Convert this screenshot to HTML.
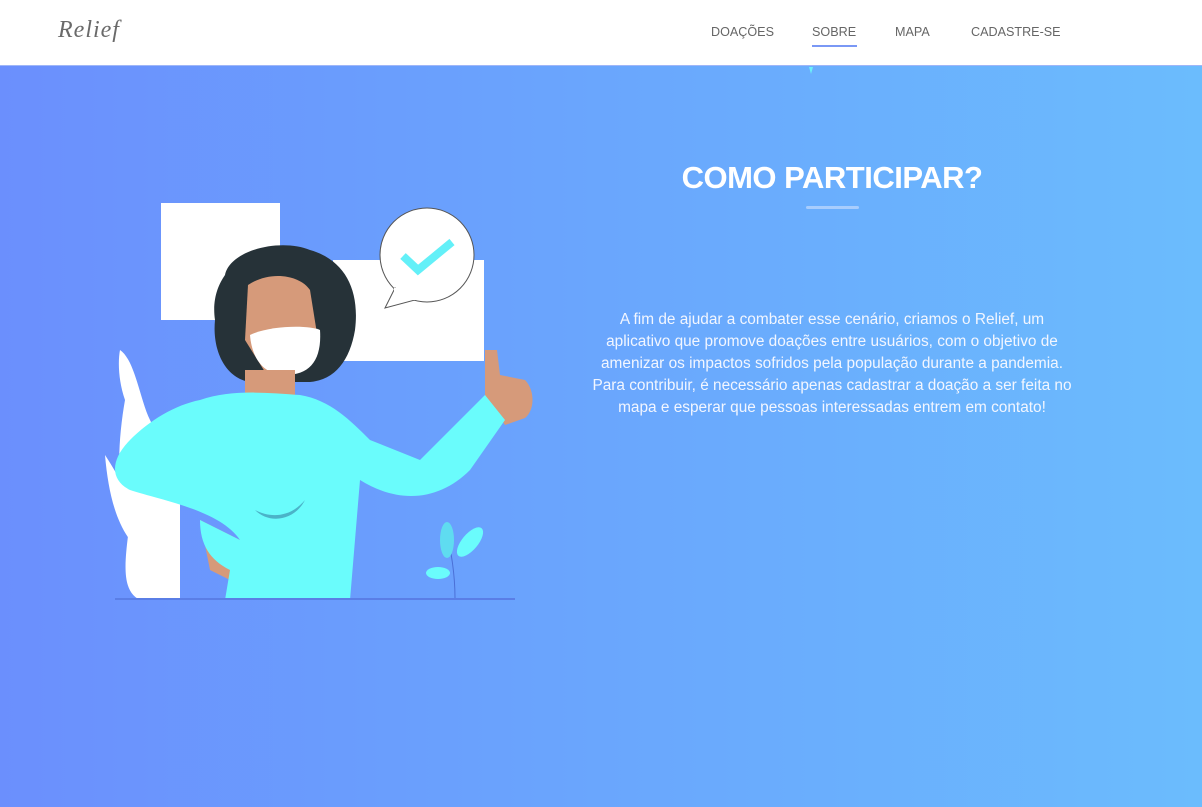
<!DOCTYPE html>
<html><head><meta charset="utf-8"><style>
*{margin:0;padding:0;box-sizing:border-box}
body{width:1202px;height:807px;overflow:hidden;font-family:"Liberation Sans",sans-serif;background:linear-gradient(90deg,#6b8ffd 0%,#6aa6fd 50%,#6bbcfd 100%);position:relative}
header{position:absolute;left:0;top:0;width:1202px;height:66px;background:#fff;border-bottom:1px solid #9fb6f8}
.logo{position:absolute;left:58px;top:17px;font-family:"Liberation Serif",serif;font-style:italic;font-size:24px;color:#6a6a6a;letter-spacing:1px}
nav a{position:absolute;top:25px;font-size:12.6px;color:#666;text-decoration:none}
.ul{position:absolute;left:812px;top:45px;width:45px;height:2px;background:#7a98f5}
h1{position:absolute;left:600px;width:464px;top:160px;text-align:center;color:#fff;font-size:31px;font-weight:bold;letter-spacing:-0.5px}
.bar{position:absolute;left:806px;top:206px;width:53px;height:3px;background:#a8cdfd;border-radius:2px}
p{position:absolute;left:532px;width:600px;top:309px;text-align:center;color:#f2f6ff;font-size:15.4px;line-height:22px;white-space:nowrap}
</style></head><body>
<header>
<div class="logo">Relief</div>
<nav><a style="left:711px">DOAÇÕES</a><a style="left:812px">SOBRE</a><a style="left:895px">MAPA</a><a style="left:971px">CADASTRE-SE</a></nav>
<div class="ul"></div>
</header>
<svg style="position:absolute;left:0;top:0" width="1202" height="807">
<path d="M809 67 L813 67 L811 74Z" fill="#6cf0f8"/>
<rect x="161" y="203" width="119" height="117" fill="#fff"/>
<rect x="333" y="260" width="151" height="101" fill="#fff"/>
<path d="M120 350 C135 360 140 400 150 420 C160 440 165 460 180 480 L180 600 L140 600 C120 590 125 560 130 520 C115 490 118 440 125 400 C118 380 118 360 120 350Z" fill="#fff"/>
<path d="M105 455 C115 470 125 490 140 510 L130 540 C115 520 108 490 105 455Z" fill="#fff"/>
<circle cx="427" cy="255" r="47" fill="#fff" stroke="#555" stroke-width="1"/>
<path d="M395 288 L385 308 L415 300Z" fill="#fff" stroke="#555" stroke-width="1"/>
<rect x="394" y="288" width="24" height="12" fill="#fff"/>
<path d="M403 256 L418 270 L452 242" fill="none" stroke="#63f0f8" stroke-width="8"/>
<path d="M225 275 C230 250 280 238 310 250 C345 260 360 290 355 330 C350 360 335 380 310 382 L250 382 C225 378 212 350 215 320 C212 300 218 285 225 275Z" fill="#263238"/>
<path d="M248 285 C270 270 300 275 310 290 L318 340 L300 372 L265 372 L245 340 Z" fill="#d69a7a"/>
<path d="M250 335 C270 325 310 325 320 330 C322 360 310 375 285 375 C265 375 252 360 250 335Z" fill="#fff"/>
<rect x="245" y="370" width="50" height="40" fill="#d69a7a"/>
<path d="M485 350 L497 350 L500 375 L525 380 C535 390 535 410 525 418 L505 425 L485 395Z" fill="#d69a7a"/>
<path d="M200 520 L240 540 L240 585 L210 570Z" fill="#d69a7a"/>
<path d="M200 400 C230 390 260 392 300 395 C330 400 350 420 370 440 L420 460 L485 395 L505 420 L470 470 C440 500 400 505 360 480 L350 600 L225 600 L230 570 C210 560 200 545 200 520 L240 540 C220 510 160 500 130 490 C110 480 110 460 130 440 C150 420 175 405 200 400Z" fill="#6afcfc"/>
<path d="M255 510 C270 518 290 518 305 500 C295 520 270 525 255 510Z" fill="#4bb3c8"/>
<path d="M455 598 C455 570 450 545 445 525" stroke="#4a6fd6" fill="none"/>
<ellipse cx="447" cy="540" rx="7" ry="18" fill="#5fdcf0"/>
<ellipse cx="470" cy="542" rx="8" ry="18" transform="rotate(40 470 542)" fill="#6afcfc"/>
<ellipse cx="438" cy="573" rx="12" ry="6" fill="#6afcfc"/>
<line x1="115" y1="599" x2="515" y2="599" stroke="#5a7ee6" stroke-width="2"/>
</svg>
<h1>COMO PARTICIPAR?</h1>
<div class="bar"></div>
<p>A fim de ajudar a combater esse cenário, criamos o Relief, um<br>aplicativo que promove doações entre usuários, com o objetivo de<br>amenizar os impactos sofridos pela população durante a pandemia.<br>Para contribuir, é necessário apenas cadastrar a doação a ser feita no<br>mapa e esperar que pessoas interessadas entrem em contato!</p>
</body></html>
